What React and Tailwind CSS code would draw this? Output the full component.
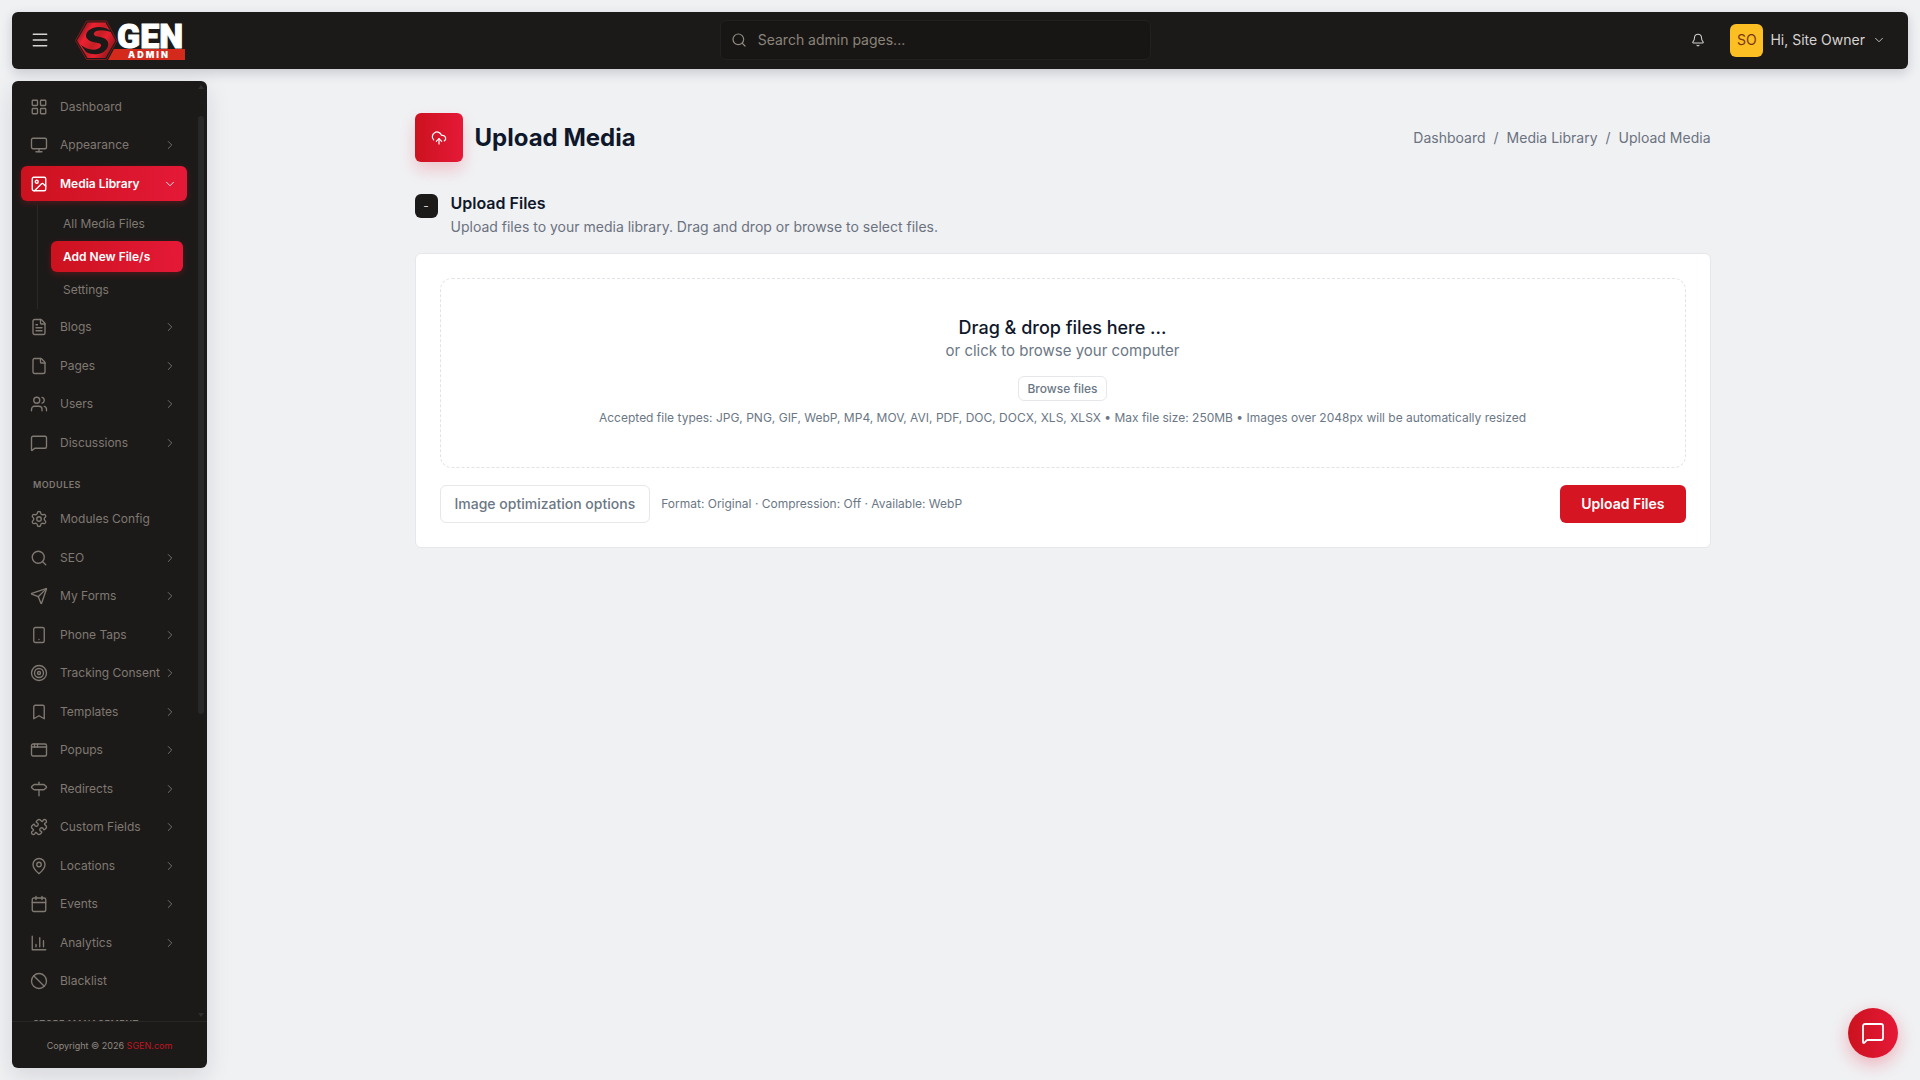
import React, { useState } from 'react';
import {
  AppWindow,
  Ban,
  Bell,
  Bookmark,
  Calendar,
  ChevronDown,
  ChevronRight,
  CloudUpload,
  File,
  FileText,
  Image,
  LayoutGrid,
  MapPin,
  Menu,
  MessageSquare,
  Monitor,
  Puzzle,
  Search,
  Send,
  Settings,
  Signpost,
  Smartphone,
  Target,
  Users,
} from 'lucide-react';

// bar chart with a square axis corner
const BarChart = ({ size = 24, strokeWidth = 2, className }) => (
  <svg
    width={size}
    height={size}
    viewBox="0 0 24 24"
    fill="none"
    stroke="currentColor"
    strokeWidth={strokeWidth}
    strokeLinecap="round"
    strokeLinejoin="round"
    className={className}
    aria-hidden="true"
  >
    <path d="M3 3v18h18M18 17V9M13 17V5M8 17v-3" />
  </svg>
);

const mainItems = [
  { label: 'Dashboard', icon: LayoutGrid, leaf: true },
  { label: 'Appearance', icon: Monitor },
  {
    label: 'Media Library',
    icon: Image,
    children: ['All Media Files', 'Add New File/s', 'Settings'],
  },
  { label: 'Blogs', icon: FileText },
  { label: 'Pages', icon: File },
  { label: 'Users', icon: Users },
  { label: 'Discussions', icon: MessageSquare },
];

const moduleItems = [
  { label: 'Modules Config', icon: Settings, leaf: true },
  { label: 'SEO', icon: Search },
  { label: 'My Forms', icon: Send },
  { label: 'Phone Taps', icon: Smartphone },
  { label: 'Tracking Consent', icon: Target },
  { label: 'Templates', icon: Bookmark },
  { label: 'Popups', icon: AppWindow },
  { label: 'Redirects', icon: Signpost },
  { label: 'Custom Fields', icon: Puzzle },
  { label: 'Locations', icon: MapPin },
  { label: 'Events', icon: Calendar },
  { label: 'Analytics', icon: BarChart },
  { label: 'Blacklist', icon: Ban, leaf: true },
];

const Logo = () => (
  <svg width="110" height="40" viewBox="0 0 110 40" className="overflow-visible" role="img" aria-label="SGEN Admin">
    <defs>
      <linearGradient id="hex" x1="0" y1="0.2" x2="1" y2="0.8">
        <stop offset="0" stopColor="#6d1517" />
        <stop offset="0.25" stopColor="#ee2131" />
        <stop offset="0.5" stopColor="#c41f26" />
        <stop offset="0.65" stopColor="#e8202f" />
        <stop offset="1" stopColor="#7d1517" />
      </linearGradient>
    </defs>
    <path d="M11.500 1h20L42 20.500 31.500 39.500h-20L0.500 20.500z" fill="none" stroke="#7d1a1a" strokeWidth="1" />
    <path d="M12.500 2.500h18L40.500 20.500 30.500 38h-18L2 20.500z" fill="url(#hex)" />
    <path
      d="M38 13C33 7.500 25 5.500 18 8c-6 2.200-8.500 7-6 10.500 2 2.800 6 3.500 10 4.200 3.500.6 4.800 1.800 3.800 3.800-1.500 3-7 4-12 2.500-3.500-1-6.500-2.500-8.800-5L11 32c5 2.500 11 3 15.500 1 6-2.500 8.500-8.500 5.500-12.500-2-2.700-6-3.300-9.500-4-3.500-.7-4.500-2-3.300-3.800C21.500 9.500 31 9.500 38 13z"
      fill="#1c1a19"
    />
    <path d="M39 29h71v11H33z" fill="#d42a1c" />
    <text
      x="42"
      y="28"
      fill="#fff"
      stroke="#fff"
      strokeWidth="1"
      fontFamily="Roboto, sans-serif"
      fontWeight="900"
      fontSize="34"
    >
      GEN
    </text>
    <text x="53" y="37.500" fill="#fff" fontFamily="Inter, sans-serif" fontWeight="900" fontSize="9" letterSpacing="2">
      ADMIN
    </text>
  </svg>
);

const NavItem = ({ item, openMenu, setOpenMenu, page, setPage }) => {
  const Icon = item.icon;
  const open = Boolean(item.children) && openMenu === item.label;
  const Chevron = open ? ChevronDown : ChevronRight;

  return (
    <li className={open ? '' : 'odd:mb-[3px] even:mb-1'}>
      <button
        type="button"
        onClick={() => setOpenMenu(open ? '' : item.label)}
        className={`flex h-[35px] w-full items-center rounded-md pr-[10px] pl-[9px] text-left text-xs ${
          open
            ? 'bg-gradient-to-r from-[#cc121e] to-[#e51937] font-semibold text-white shadow-[0_2px_6px_rgba(213,21,34,0.3)]'
            : 'text-[#7f7971] hover:text-white'
        }`}
      >
        <Icon size={18} strokeWidth={1.8} className="shrink-0" />
        <span className="ml-3 grow whitespace-nowrap">{item.label}</span>
        {!item.leaf && <Chevron size={14} strokeWidth={1.5} className="shrink-0" />}
      </button>
      {open && (
        <ul className="mt-1 mr-1 ml-4 flex flex-col gap-[2px] border-l border-[#2b2927] pt-[3px] pb-1 pl-[13px]">
          {item.children.map((child) => (
            <li key={child}>
              <a
                href="#"
                onClick={() => setPage(child)}
                className={`flex h-[31px] items-center rounded-md px-3 text-xs ${
                  page === child
                    ? 'bg-gradient-to-r from-[#cc121e] to-[#e51937] font-semibold text-white shadow-[0_2px_6px_rgba(213,21,34,0.3)]'
                    : 'text-[#7f7971] hover:text-white'
                }`}
              >
                {child}
              </a>
            </li>
          ))}
        </ul>
      )}
    </li>
  );
};

const NavHeading = ({ children }) => (
  <li>
    <h2 className="px-3 pt-[14px] pb-2 text-[9px] leading-4 font-semibold tracking-wider text-[#7f7971] uppercase">
      {children}
    </h2>
  </li>
);

const Sidebar = () => {
  const [openMenu, setOpenMenu] = useState('Media Library');
  const [page, setPage] = useState('Add New File/s');
  const menu = { openMenu, setOpenMenu, page, setPage };

  return (
    <aside className="flex w-[195px] shrink-0 flex-col overflow-hidden rounded-md bg-[#1c1a19] shadow-[0_8px_24px_rgba(15,23,42,0.12)]">
      <div className="flex min-h-0 grow">
        <nav className="min-w-0 grow overflow-y-auto py-2 pr-[11px] pl-[9px] [scrollbar-width:none]">
          <ul>
            {mainItems.map((item) => (
              <NavItem key={item.label} item={item} {...menu} />
            ))}
          </ul>
          <ul>
            <NavHeading>Modules</NavHeading>
            {moduleItems.map((item) => (
              <NavItem key={item.label} item={item} {...menu} />
            ))}
          </ul>
          <ul>
            <NavHeading>Store Management</NavHeading>
          </ul>
        </nav>
        {/* scrollbar */}
        <div className="mr-[3px] flex w-[6px] shrink-0 flex-col items-center py-1" aria-hidden="true">
          <svg width="6" height="4" viewBox="0 0 6 4" fill="#2e2e2e">
            <path d="M0 4l3-4 3 4z" />
          </svg>
          <div className="mt-[27px] h-[598px] w-[6px] rounded-full bg-[#282828]" />
          <svg width="6" height="4" viewBox="0 0 6 4" fill="#2e2e2e" className="mt-auto">
            <path d="M0 0h6L3 4z" />
          </svg>
        </div>
      </div>
      <div className="border-t border-[#292725] pt-[17px] pb-[15px] text-center text-[9px] leading-[14px] text-[#8f8981]">
        Copyright © 2026{' '}
        <a href="#" className="text-[#c0141f]">
          SGEN.com
        </a>
      </div>
    </aside>
  );
};

const Header = () => (
  <header className="flex h-[57px] shrink-0 items-center justify-between rounded-md bg-[#1c1a19] pr-[22px] pb-px pl-[18px] shadow-[0_4px_12px_rgba(15,23,42,0.18)]">
    <div className="flex items-center gap-[25px]">
      <button type="button" aria-label="Toggle menu" className="text-[#d6d3d1]">
        <Menu size={20} strokeWidth={1.8} />
      </button>
      <a href="#">
        <Logo />
      </a>
    </div>

    <label className="flex h-10 w-[431px] items-center rounded-md border border-[#23211f] bg-[#181614] pl-[10px]">
      <Search size={16} strokeWidth={1.8} className="shrink-0 text-[#8f8981]" />
      <input
        type="text"
        aria-label="Search admin pages"
        placeholder="Search admin pages..."
        className="ml-[11px] grow bg-transparent text-sm text-white outline-none placeholder:text-[#8a847b]"
      />
    </label>

    <div className="flex items-center">
      <button type="button" aria-label="Notifications" className="flex w-[26px] justify-center text-[#d6d3d1]">
        <Bell size={14} strokeWidth={1.8} />
      </button>
      <button type="button" className="ml-[19px] flex items-center text-sm text-[#d6d3d1]">
        <span className="flex size-[33px] items-center justify-center rounded-md bg-[#fbbf24] text-[#78350f]">SO</span>
        <span className="ml-[7px]">Hi, Site Owner</span>
        <ChevronDown size={14} strokeWidth={1.5} className="ml-[7px]" />
      </button>
    </div>
  </header>
);

const UploadCard = () => (
  <div className="rounded-md border border-[#e5e7eb] bg-white p-6">
    <div className="flex flex-col items-center rounded-xl border border-dashed border-[#e1e3e6] pt-[37px] pb-10 text-center text-[#6b7785]">
      <h3 className="text-lg leading-6 font-medium text-[#0f172a]">Drag &amp; drop files here ...</h3>
      <p className="text-[15px] leading-[22px]">or click to browse your computer</p>
      <button type="button" className="mt-[14px] h-[25px] rounded-md border border-[#e5e7eb] px-2 text-xs font-medium">
        Browse files
      </button>
      <p className="mt-2 text-xs leading-[18px]">
        Accepted file types: JPG, PNG, GIF, WebP, MP4, MOV, AVI, PDF, DOC, DOCX, XLS, XLSX • Max file size: 250MB •
        Images over 2048px will be automatically resized
      </p>
    </div>
    <div className="mt-[17px] flex items-center">
      <button
        type="button"
        className="h-[38px] rounded-md border border-[#e5e7eb] px-[14px] text-sm font-medium text-[#6b7785]"
      >
        Image optimization options
      </button>
      <span className="ml-[11px] text-xs text-[#6b7785]">Format: Original · Compression: Off · Available: WebP</span>
      <button
        type="button"
        className="ml-auto h-[38px] rounded-md bg-[#d51522] px-[21px] text-sm font-semibold text-white"
      >
        Upload Files
      </button>
    </div>
  </div>
);

const App = () => {
  const [expanded, setExpanded] = useState(true);

  return (
    <div className="flex h-screen flex-col gap-3 bg-[#f0f1f3] p-3 font-['Inter',sans-serif]">
      <Header />
      <div className="flex min-h-0 grow gap-3">
        <Sidebar />
        <main className="min-w-0 grow overflow-y-auto pt-8 pr-[2px]">
          <div className="mx-auto max-w-[1296px]">
            <div className="mb-8 flex items-center">
              <div className="flex h-[49px] w-12 items-center justify-center rounded-md bg-gradient-to-r from-[#cc121e] to-[#e51937] text-white shadow-[0_8px_16px_rgba(229,25,55,0.2)]">
                <CloudUpload size={16} strokeWidth={1.8} />
              </div>
              <h1 className="ml-3 text-2xl font-bold text-[#0f172a]">Upload Media</h1>
              <nav className="ml-auto flex gap-2 text-sm text-[#6b7280]" aria-label="Breadcrumb">
                <a href="#">Dashboard</a>
                <span>/</span>
                <a href="#">Media Library</a>
                <span>/</span>
                <span>Upload Media</span>
              </nav>
            </div>

            <section>
              <div className="mb-4 flex items-start gap-[13px]">
                <button
                  type="button"
                  onClick={() => setExpanded(!expanded)}
                  aria-label="Toggle section"
                  className="h-6 w-[23px] rounded-md bg-[#1c1a19] text-xs text-[#d6d3d1]"
                >
                  {expanded ? '-' : '+'}
                </button>
                <div className="flex flex-col gap-[5px]">
                  <h2 className="text-base leading-[18px] font-semibold text-[#0f172a]">Upload Files</h2>
                  <p className="text-sm leading-5 text-[#6b7280]">
                    Upload files to your media library. Drag and drop or browse to select files.
                  </p>
                </div>
              </div>
              {expanded && <UploadCard />}
            </section>
          </div>
        </main>
      </div>

      <button
        type="button"
        aria-label="Open chat"
        className="fixed right-[22px] bottom-[22px] flex size-[50px] items-center justify-center rounded-full bg-gradient-to-r from-[#cc121e] to-[#e51937] text-white shadow-[0_6px_18px_rgba(229,25,55,0.3)]"
      >
        <MessageSquare size={24} strokeWidth={1.8} />
      </button>
    </div>
  );
};

export default App;
